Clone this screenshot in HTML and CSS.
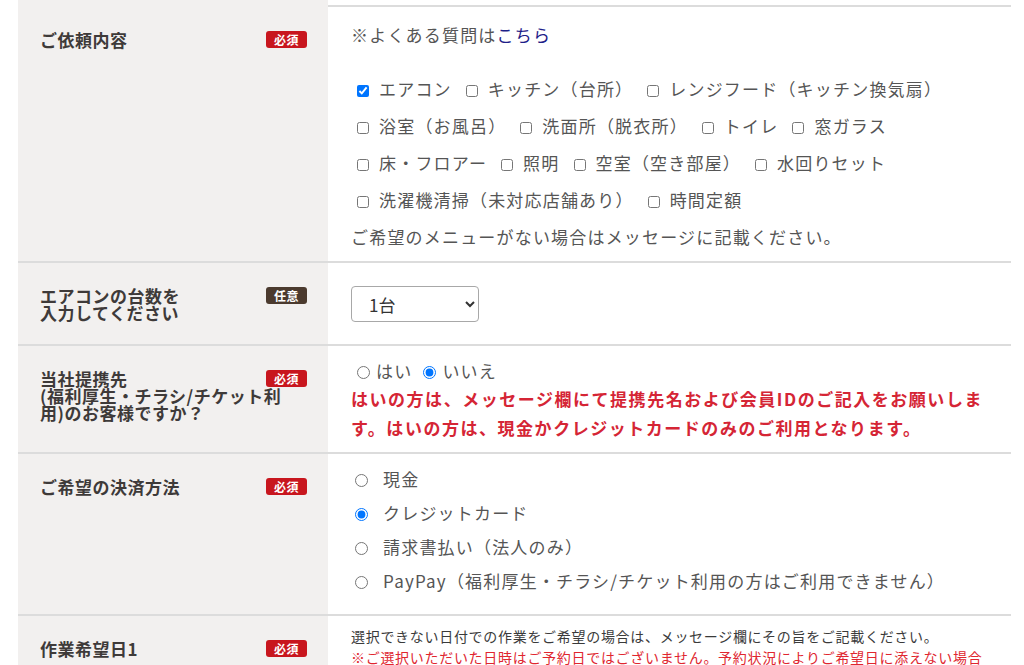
FILE: index.html
```html
<!DOCTYPE html>
<html lang="ja">
<head>
    <meta charset="UTF-8">
    <title>お問い合わせ</title>
    <link rel="stylesheet" href="styles.css">
</head>
<body>
    <div class="form">
        <div class="row row-prev">
            <div class="th"></div>
            <div class="td"></div>
        </div>

        <div class="row">
            <div class="th">
                <span class="badge req">必須</span>
                <span class="label">ご依頼内容</span>
            </div>
            <div class="td td-menu">
                <p class="faq">※よくある質問は<a href="#">こちら</a></p>
                <div class="checks">
                    <label class="chk"><input type="checkbox" checked> エアコン</label>
                    <label class="chk"><input type="checkbox"> キッチン（台所）</label>
                    <label class="chk"><input type="checkbox"> レンジフード（キッチン換気扇）</label>
                    <label class="chk"><input type="checkbox"> 浴室（お風呂）</label>
                    <label class="chk"><input type="checkbox"> 洗面所（脱衣所）</label>
                    <label class="chk"><input type="checkbox"> トイレ</label>
                    <label class="chk"><input type="checkbox"> 窓ガラス</label>
                    <label class="chk"><input type="checkbox"> 床・フロアー</label>
                    <label class="chk"><input type="checkbox"> 照明</label>
                    <label class="chk"><input type="checkbox"> 空室（空き部屋）</label>
                    <label class="chk"><input type="checkbox"> 水回りセット</label>
                    <label class="chk"><input type="checkbox"> 洗濯機清掃（未対応店舗あり）</label>
                    <label class="chk"><input type="checkbox"> 時間定額</label>
                </div>
                <p class="note">ご希望のメニューがない場合はメッセージに記載ください。</p>
            </div>
        </div>

        <div class="row">
            <div class="th">
                <span class="badge opt">任意</span>
                <span class="label">エアコンの台数を<br>入力してください</span>
            </div>
            <div class="td td-count">
                <select class="count">
                    <option>1台</option>
                    <option>2台</option>
                    <option>3台</option>
                    <option>4台</option>
                    <option>5台以上</option>
                </select>
            </div>
        </div>

        <div class="row">
            <div class="th">
                <span class="badge req">必須</span>
                <span class="label">当社提携先<br>(福利厚生・チラシ/チケット利用)のお客様ですか？</span>
            </div>
            <div class="td td-partner">
                <div class="yesno">
                    <label class="rad"><input type="radio" name="partner">はい</label>
                    <label class="rad"><input type="radio" name="partner" checked>いいえ</label>
                </div>
                <p class="warn">はいの方は、メッセージ欄にて提携先名および会員IDのご記入をお願いします。はいの方は、現金かクレジットカードのみのご利用となります。</p>
            </div>
        </div>

        <div class="row">
            <div class="th">
                <span class="badge req">必須</span>
                <span class="label">ご希望の決済方法</span>
            </div>
            <div class="td td-pay">
                <label class="pay"><input type="radio" name="pay">現金</label>
                <label class="pay"><input type="radio" name="pay" checked>クレジットカード</label>
                <label class="pay"><input type="radio" name="pay">請求書払い（法人のみ）</label>
                <label class="pay"><input type="radio" name="pay">PayPay（福利厚生・チラシ/チケット利用の方はご利用できません）</label>
            </div>
        </div>

        <div class="row">
            <div class="th">
                <span class="badge req">必須</span>
                <span class="label">作業希望日1</span>
            </div>
            <div class="td td-date">
                <p class="small">選択できない日付での作業をご希望の場合は、メッセージ欄にその旨をご記載ください。</p>
                <p class="small small-red">※ご選択いただいた日時はご予約日ではございません。予約状況によりご希望日に添えない場合もございます。</p>
            </div>
        </div>
    </div>
</body>
</html>
```

FILE: styles.css
```css
body {
    margin: 0;
    font-family: "Noto Sans CJK JP", "Noto Sans", sans-serif;
    background: #fff;
}

p {
    margin: 0;
}

.form {
    width: 993px;
    margin-left: 18px;
}

.row {
    display: flex;
    border-top: 2px solid #dcdcdc;
}

.row-prev {
    height: 5px;
    border-top: none;
}

.th {
    width: 310px;
    flex-shrink: 0;
    box-sizing: border-box;
    background: #f2f0ef;
    padding: 24px 36px 20px 22px;
}

.label {
    display: block;
    font-size: 17px;
    font-weight: bold;
    line-height: 17px;
    letter-spacing: 0.5px;
    color: #3e3a39;
}

.badge {
    float: right;
    margin-right: -15px;
    width: 41px;
    height: 17px;
    line-height: 17px;
    border-radius: 3px;
    text-align: center;
    font-size: 12px;
    font-weight: bold;
    letter-spacing: 0.5px;
    color: #fff;
}

.req {
    background: #c8161e;
}

.opt {
    background: #4b3a2e;
}

.td {
    flex: 1;
    box-sizing: border-box;
    padding: 0 20px 0 23px;
    font-size: 17px;
    letter-spacing: 0.07em;
    color: #555;
}

/* ご依頼内容 */
.td-menu {
    padding-top: 9px;
    padding-bottom: 6px;
    line-height: 37px;
}

.faq {
    margin-bottom: 17px;
}

.faq a {
    color: #1d2088;
    text-decoration: none;
}

.chk {
    white-space: nowrap;
    margin-right: 3px;
}

.chk input {
    width: 12px;
    height: 12px;
    margin: 0 5px 0 6px;
    vertical-align: -1px;
}

/* 台数 */
.td-count {
    padding-top: 23px;
    padding-bottom: 22px;
}

.count {
    width: 128px;
    height: 36px;
    padding: 0 8px 0 13px;
    font-family: "Noto Sans CJK JP", sans-serif;
    font-size: 17px;
    color: #333;
    background: #fff;
    border: 1px solid #a8a8a8;
    border-radius: 4px;
}

/* 提携先 */
.td-partner {
    padding-top: 11px;
    padding-bottom: 10px;
}

.yesno {
    line-height: 27px;
}

.rad input {
    margin: 0 6px 0 6px;
    vertical-align: -1px;
}

.warn {
    line-height: 29px;
    font-weight: bold;
    letter-spacing: 0.09em;
    color: #d52535;
}

/* 決済方法 */
.td-pay {
    padding-top: 8px;
    padding-bottom: 16px;
    line-height: 34px;
}

.pay {
    display: block;
}

.pay input {
    margin: 0 15px 0 4px;
    vertical-align: -1px;
}

/* 作業希望日 */
.td-date {
    padding-top: 10px;
    padding-bottom: 20px;
}

.small {
    font-size: 14px;
    line-height: 21px;
    letter-spacing: 0.05em;
    color: #3a3a3a;
}

.small-red {
    color: #e0262f;
}
```
